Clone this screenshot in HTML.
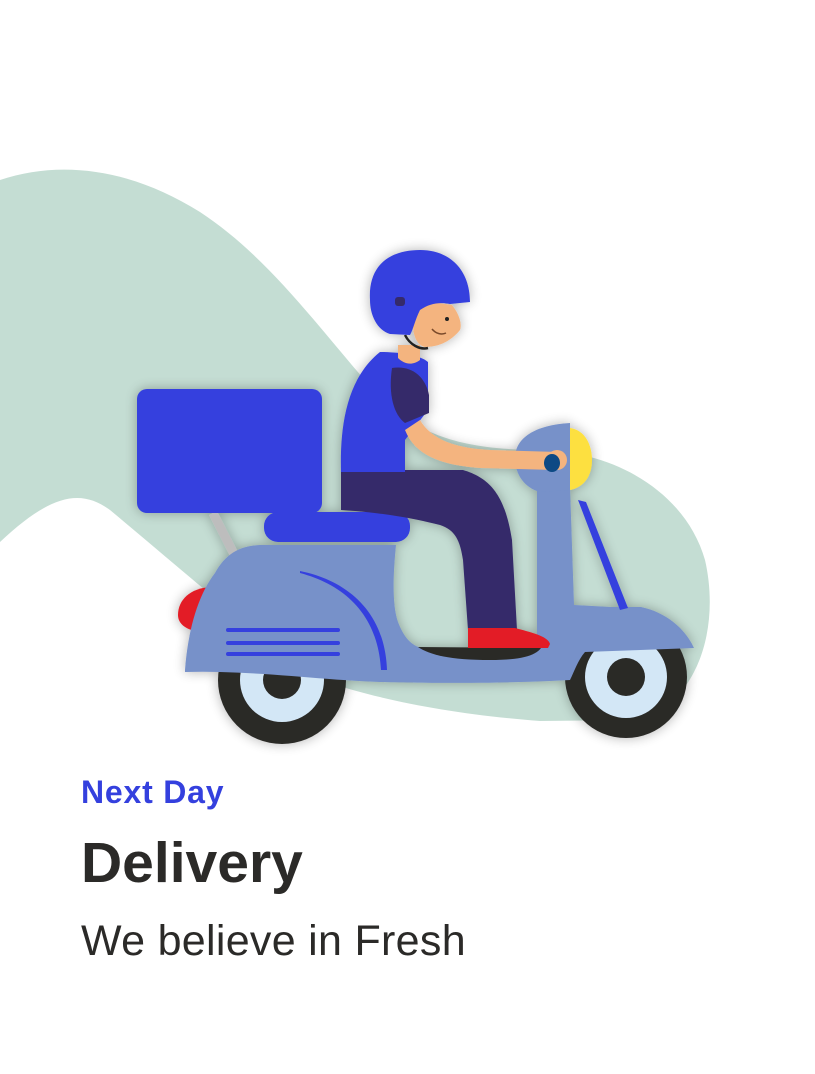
<!DOCTYPE html>
<html><head><meta charset="utf-8"><style>
html,body{margin:0;padding:0;background:#fff;width:815px;height:1074px;overflow:hidden;position:relative;font-family:"Liberation Sans",sans-serif}
svg{position:absolute;left:0;top:0}
.t{position:absolute;left:81px;white-space:nowrap;line-height:1}
</style></head><body>
<svg width="815" height="1074" viewBox="0 0 815 1074">
<defs><filter id="sh" x="-20%" y="-20%" width="140%" height="140%"><feGaussianBlur in="SourceAlpha" stdDeviation="6"/><feOffset dx="0" dy="0" result="b"/><feComponentTransfer><feFuncA type="linear" slope="0.3"/></feComponentTransfer><feMerge><feMergeNode/><feMergeNode in="SourceGraphic"/></feMerge></filter></defs>
<path d="M0,180 C60,160 130,168 200,212 C270,258 320,330 372,388 C410,430 450,448 530,450 C610,448 685,490 705,560 C720,625 700,700 640,720 L540,721 C450,714 380,700 320,680 C250,630 170,560 110,510 C80,488 50,495 0,542 Z" fill="#c4ddd3"/>
<g filter="url(#sh)">
<line x1="213" y1="513" x2="237" y2="560" stroke="#bdbdbd" stroke-width="9"/>
<rect x="137" y="389" width="185" height="124" rx="10" fill="#3440de"/>
<path d="M211,587 C190,588 178,600 178,615 C178,624 186,630 200,632 Z" fill="#e31e25"/>
<circle cx="282" cy="680" r="64" fill="#2b2a28"/><circle cx="282" cy="680" r="42" fill="#d3e7f6"/><circle cx="282" cy="680" r="19" fill="#2b2a28"/>
<circle cx="626" cy="677" r="61" fill="#2b2a28"/><circle cx="626" cy="677" r="41" fill="#d3e7f6"/><circle cx="626" cy="677" r="19" fill="#2b2a28"/>
<path d="M185,670 C188,630 198,595 215,573 C225,555 238,546 260,545 L396,545 C393,575 392,605 398,622 C404,638 412,646 422,648 L537,650 L537,487 L570,487 L574,605 L611,607 L641,607 C665,612 685,628 694,648 L585,652 C578,660 574,672 570,680 C500,684 420,683 380,682 C320,680 250,670 185,672 Z" fill="#7791c9"/>
<path d="M570,423 L570,490 L540,492 C525,488 515,475 515,458 C515,438 535,425 570,423 Z" fill="#7791c9"/>
<path d="M570,428 C585,430 592,445 592,460 C592,475 585,487 570,490 Z" fill="#fde03f"/>
<path d="M578,500 L586,502 L628,608 L620,610 Z" fill="#3440de"/>
<path d="M418,647 L541,648 C535,656 520,660 490,660 C450,660 430,655 418,647 Z" fill="#2b2a28"/>
<g stroke="#3440de" stroke-width="4" stroke-linecap="round"><line x1="228" y1="630" x2="338" y2="630"/><line x1="228" y1="643" x2="338" y2="643"/><line x1="228" y1="654" x2="338" y2="654"/></g>
<path d="M300,571 C345,580 385,610 387,670 L381,670 C378,615 345,585 300,573 Z" fill="#3440de"/>
<rect x="264" y="512" width="146" height="30" rx="14" fill="#3440de"/>
<path d="M341,470 L463,470 C490,478 505,495 512,540 L517,630 L468,630 L463,560 C460,540 455,530 440,525 C400,515 370,512 341,510 Z" fill="#352a6b"/>
<path d="M468,628 L515,628 C530,632 548,636 550,644 L548,648 L468,648 Z" fill="#e31e25"/>
<path d="M380,352 C400,352 420,355 428,362 L428,410 L405,440 L405,472 L341,472 C340,430 345,380 380,352 Z" fill="#3440de"/>
<path d="M405,430 C415,455 440,465 480,468 L555,470 L558,452 L490,450 C455,448 432,440 420,420 Z" fill="#f4b47f"/>
<circle cx="557" cy="460" r="10" fill="#f4b47f"/>
<ellipse cx="552" cy="463" rx="8" ry="9" fill="#0a4a84"/>
<path d="M392,368 C410,365 425,375 429,395 L429,413 L405,423 C394,415 388,395 392,368 Z" fill="#352a6b"/>
<path d="M398,345 L420,345 L420,360 C412,366 404,364 398,358 Z" fill="#f4b47f"/>
<path d="M418,300 L452,305 C460,315 462,325 460,330 C452,340 440,347 425,347 C415,345 410,330 415,310 Z" fill="#f4b47f"/>
<path d="M405,335 C410,345 420,350 428,348" stroke="#222" stroke-width="2.5" fill="none"/>
<path d="M432,329 C436,334 442,335 446,333" stroke="#7a4a2a" stroke-width="1.5" fill="none"/>
<circle cx="447" cy="319" r="2" fill="#222"/>
<path d="M370,300 C368,265 390,250 420,250 C450,250 470,270 470,302 L450,304 C440,302 430,303 420,310 C415,320 413,330 410,335 L390,334 C377,330 370,315 370,300 Z" fill="#3440de"/>
<rect x="395" y="297" width="10" height="9" rx="3" fill="#352a6b"/>
</g>
</svg>
<div class="t" style="top:776px;font-size:32px;font-weight:bold;color:#3440de;letter-spacing:0.8px">Next Day</div>
<div class="t" style="top:835px;font-size:57px;font-weight:bold;color:#2b2a28">Delivery</div>
<div class="t" style="top:920px;font-size:43px;color:#2b2a28;letter-spacing:0.3px">We believe in Fresh</div>
</body></html>
